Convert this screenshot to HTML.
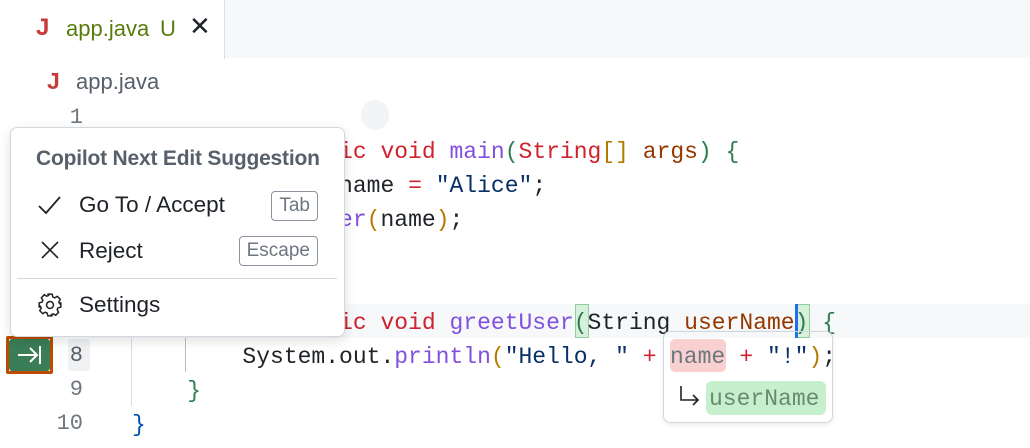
<!DOCTYPE html>
<html><head><style>
*{margin:0;padding:0;box-sizing:border-box}
body{width:1030px;height:448px;background:#fff;position:relative;overflow:hidden;font-family:"Liberation Sans",sans-serif}
.abs{position:absolute}
.code{position:absolute;left:132px;font-family:"Liberation Mono",monospace;font-size:23px;line-height:34px;height:34px;white-space:pre;color:#1f2328}
.ln{position:absolute;width:50px;left:33px;text-align:right;font-family:"Liberation Mono",monospace;font-size:22px;line-height:34px;color:#6e7781}
.k{color:#cf222e}.f{color:#8250df}.p1{color:#b57b00}.p2{color:#2f7d4f}.v{color:#953800}.s{color:#0a3069}.b{color:#0550ae}
.kbd{position:absolute;right:712px;border:1px solid #8c959f;border-radius:4px;color:#6e7781;font-size:19px;line-height:28px;padding:0 7px}
.mi{position:absolute;left:79px;font-size:22.5px;color:#1f2328}
</style></head><body>
<div class="abs" style="left:0;top:0;width:1030px;height:58px;background:#f6f8fa"></div>
<div class="abs" style="left:0;top:0;width:225px;height:59px;background:#fff;border-right:1px solid #d8dee4"></div>
<div class="abs" style="left:36px;top:14px;font-size:24px;font-weight:bold;color:#c73a3a">J</div>
<div class="abs" style="left:66px;top:16px;font-size:22px;color:#587c0c">app.java</div>
<div class="abs" style="left:160px;top:16px;font-size:22px;color:#587c0c">U</div>
<div class="abs" style="left:189px;top:11px;font-size:26px;color:#1f2328">✕</div>
<div class="abs" style="left:47px;top:68px;font-size:23px;font-weight:bold;color:#c73a3a">J</div>
<div class="abs" style="left:76px;top:69px;font-size:22px;color:#57606a">app.java</div>
<div class="abs" style="left:90px;top:304px;width:940px;height:34px;background:#f6f8fa"></div>
<div class="abs" style="left:68px;top:339px;width:22px;height:32px;background:#eff1f3;border-radius:3px"></div>
<div class="abs" style="left:361px;top:100px;width:28px;height:30px;border-radius:14px;background:#f3f4f6"></div>
<div class="abs" style="left:131px;top:338px;width:1px;height:68px;background:#d8dee4"></div>
<div class="abs" style="left:185px;top:338px;width:1px;height:34px;background:#bbb"></div>
<div class="ln" style="top:101px">1</div>
<div class="ln" style="top:339px;color:#57606a">8</div>
<div class="ln" style="top:373px">9</div>
<div class="ln" style="top:407px">10</div>
<div class="code" style="top:135px">    <span class="k">public static void</span> <span class="f">main</span><span class="p2">(</span><span class="k">String</span><span class="p1">[]</span> <span class="v">args</span><span class="p2">)</span> <span class="p2">{</span></div>
<div class="code" style="top:169px">        <span class="k">String</span> name <span class="k">=</span> <span class="s">"Alice"</span>;</div>
<div class="code" style="top:203px">        <span class="f">greetUser</span><span class="p1">(</span>name<span class="p1">)</span>;</div>
<div class="code" style="top:237px">    <span class="p2">}</span></div>
<div class="abs" style="left:575px;top:304px;width:14px;height:34px;background:#d6f0dc;border:1px solid #8fd19e"></div>
<div class="abs" style="left:796px;top:304px;width:14px;height:34px;background:#d6f0dc;border:1px solid #8fd19e"></div>
<div class="code" style="top:306px">    <span class="k">public static void</span> <span class="f">greetUser</span><span class="p2">(</span>String <span class="v">userName</span><span class="p2">)</span> <span class="p2">{</span></div>
<div class="abs" style="left:795px;top:304px;width:3px;height:34px;background:#1f6feb"></div>
<div class="code" style="top:340px">        System.out.<span class="f">println</span><span class="p1">(</span><span class="s">"Hello, "</span> <span class="k">+</span> <span style="color:transparent">name</span> <span class="k">+</span> <span class="s">"!"</span><span class="p1">)</span>;</div>
<div class="code" style="top:374px">    <span class="p2">}</span></div>
<div class="code" style="top:408px"><span class="b">}</span></div>
<div class="abs" style="left:663px;top:331px;width:170px;height:92px;border:1px solid #d0d7de;border-radius:7px;box-shadow:0 2px 6px rgba(0,0,0,.08)"></div>
<div class="abs" style="left:670px;top:339px;width:56px;height:33px;background:#f8d0d0;border-radius:5px"></div>
<div class="code" style="left:670px;top:340px;color:#6e7781">name</div>
<svg class="abs" style="left:678px;top:384px" width="24" height="24"><path d="M3 2V16H20M15 11L20 16L15 21" fill="none" stroke="#1f2328" stroke-width="1.6"/></svg>
<div class="abs" style="left:706px;top:381px;width:120px;height:34px;background:#c6efce;border-radius:6px"></div>
<div class="code" style="left:709px;top:382px;color:#6a8a70">userName</div>
<div class="abs" style="left:6px;top:336px;width:47px;height:38px;border:3px solid #bc4c00;border-radius:2px;background:#fff"></div>
<div class="abs" style="left:9px;top:339px;width:41px;height:32px;background:#3a7d57;border-radius:3px"></div>
<svg class="abs" style="left:15px;top:343px" width="30" height="24"><path d="M3 12H22M15 5L22 12L15 19M25 3V21" fill="none" stroke="#fff" stroke-width="2"/></svg>
<div class="abs" style="left:10px;top:127px;width:335px;height:210px;background:#fff;border:1px solid #d0d7de;border-radius:7px;box-shadow:0 4px 12px rgba(0,0,0,.12)"></div>
<div class="abs" style="left:36px;top:147px;font-size:21px;font-weight:bold;color:#57606a;letter-spacing:-.2px">Copilot Next Edit Suggestion</div>
<svg class="abs" style="left:37px;top:193px" width="26" height="24"><path d="M2 13L9 20L23 4" fill="none" stroke="#1f2328" stroke-width="1.8"/></svg>
<div class="mi" style="top:192px">Go To / Accept</div>
<div class="kbd" style="top:191px">Tab</div>
<svg class="abs" style="left:40px;top:240px" width="20" height="20"><path d="M2 2L18 18M18 2L2 18" fill="none" stroke="#1f2328" stroke-width="1.6"/></svg>
<div class="mi" style="top:238px">Reject</div>
<div class="kbd" style="top:236px">Escape</div>
<div class="abs" style="left:17px;top:278px;width:320px;height:1px;background:#d0d7de"></div>
<svg class="abs" style="left:37px;top:292px" width="26" height="26" viewBox="0 0 24 24"><path d="M10 2h4l.6 2.6 1.8.8 2.3-1.4 2.8 2.8-1.4 2.3.8 1.8L22 10v4l-2.6.6-.8 1.8 1.4 2.3-2.8 2.8-2.3-1.4-1.8.8L14 22h-4l-.6-2.6-1.8-.8-2.3 1.4-2.8-2.8 1.4-2.300-.8-1.8L2 14v-4l2.6-.6.8-1.8-1.4-2.3 2.8-2.8 2.3 1.4 1.8-.8z" fill="none" stroke="#1f2328" stroke-width="1.4" stroke-linejoin="round"/><circle cx="12" cy="12" r="3.2" fill="none" stroke="#1f2328" stroke-width="1.4"/></svg>
<div class="mi" style="top:292px">Settings</div>
</body></html>
